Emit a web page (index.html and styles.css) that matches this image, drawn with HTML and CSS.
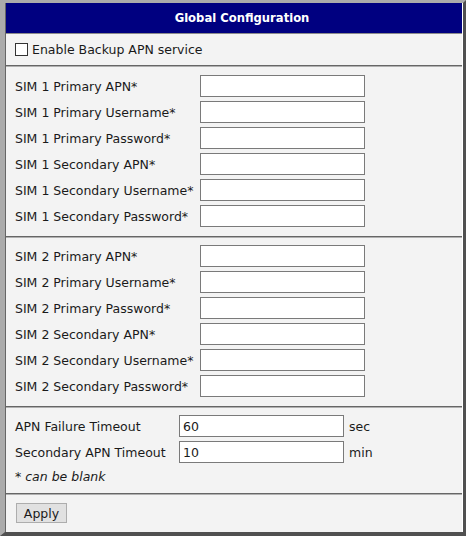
FILE: index.html
```html
<!DOCTYPE html>
<html lang="en">
<head>
  <meta charset="UTF-8" />
  <title>Global Configuration</title>
  <link rel="stylesheet" href="styles.css">
</head>
<body>
  <div class="frame">
    <div class="box">
      <div class="title">Global Configuration</div>

      <div class="section check-row">
        <label><input type="checkbox" id="enableBackup" /> Enable Backup APN service</label>
      </div>

      <div class="section fields">
        <label>SIM 1 Primary APN*</label><input type="text" />
        <label>SIM 1 Primary Username*</label><input type="text" />
        <label>SIM 1 Primary Password*</label><input type="text" />
        <label>SIM 1 Secondary APN*</label><input type="text" />
        <label>SIM 1 Secondary Username*</label><input type="text" />
        <label>SIM 1 Secondary Password*</label><input type="text" />
      </div>

      <div class="section fields">
        <label>SIM 2 Primary APN*</label><input type="text" />
        <label>SIM 2 Primary Username*</label><input type="text" />
        <label>SIM 2 Primary Password*</label><input type="text" />
        <label>SIM 2 Secondary APN*</label><input type="text" />
        <label>SIM 2 Secondary Username*</label><input type="text" />
        <label>SIM 2 Secondary Password*</label><input type="text" />
      </div>

      <div class="section timeouts">
        <div class="fields short">
          <label>APN Failure Timeout</label><input type="text" value="60" /><span class="unit">sec</span>
          <label>Secondary APN Timeout</label><input type="text" value="10" /><span class="unit">min</span>
        </div>
        <div class="note">* can be blank</div>
      </div>

      <div class="section actions">
        <button>Apply</button>
      </div>
    </div>
  </div>
</body>
</html>
```

FILE: styles.css
```css
body {
  margin: 0;
  background: #fff;
  font-family: "DejaVu Sans", Verdana, sans-serif;
  font-size: 12.5px;
  color: #1a1a1a;
}

.frame {
  width: 458px;
  border-top: 3px solid #ababab;
  border-left: 5px solid #ababab;
  border-right: 3px solid #505050;
  border-bottom: 4px solid #505050;
}

.box {
  background: #f3f3f3;
  border-left: 1px solid #666;
  border-right: 1px solid #fff;
}

.title {
  height: 30px;
  line-height: 30px;
  background: #000080;
  color: #fff;
  font-weight: bold;
  font-size: 11.6px;
  text-align: center;
  padding-left: 16px;
  border-bottom: 1px solid #8c8c8c;
}

.section {
  padding: 8px 9px 9px;
  border-top: 1px solid #666;
  box-shadow: inset 0 1px 0 #b0b0b0;
}

.check-row {
  border-top: none;
  box-shadow: none;
  height: 31px;
  padding: 0 9px;
  display: flex;
  align-items: center;
  border-bottom: 1px solid #666;
}

.check-row + .section {
  border-top: 1px solid #b0b0b0;
  box-shadow: none;
}

.check-row label {
  display: flex;
  align-items: center;
  gap: 4px;
}

.check-row input {
  appearance: none;
  margin: 0;
  width: 13px;
  height: 13px;
  border: 1px solid #333;
  background: #fff;
}

.fields {
  display: grid;
  grid-template-columns: 185px 165px 1fr;
  row-gap: 4px;
  align-items: center;
}

.fields label {
  grid-column: 1;
}

.fields input {
  grid-column: 2;
  box-sizing: border-box;
  width: 165px;
  height: 22px;
  margin: 0;
  padding: 0 3px;
  border: 1px solid #7a7a7a;
  background: #fff;
  font: inherit;
  color: #1a1a1a;
}

.fields.short {
  grid-template-columns: 164px 165px 1fr;
}

.timeouts {
  padding-bottom: 8px;
}

.unit {
  grid-column: 3;
  padding-left: 5px;
}

.note {
  font-style: italic;
  margin-top: 7px;
  padding-bottom: 1px;
  line-height: 14px;
}

.actions {
  padding: 9px 9px 9px;
}

.actions button {
  display: block;
  width: 51px;
  height: 20px;
  margin-left: 1px;
  padding: 0;
  background: #e1e1e1;
  border: 1px solid #adadad;
  font: inherit;
  color: #1a1a1a;
}
```
